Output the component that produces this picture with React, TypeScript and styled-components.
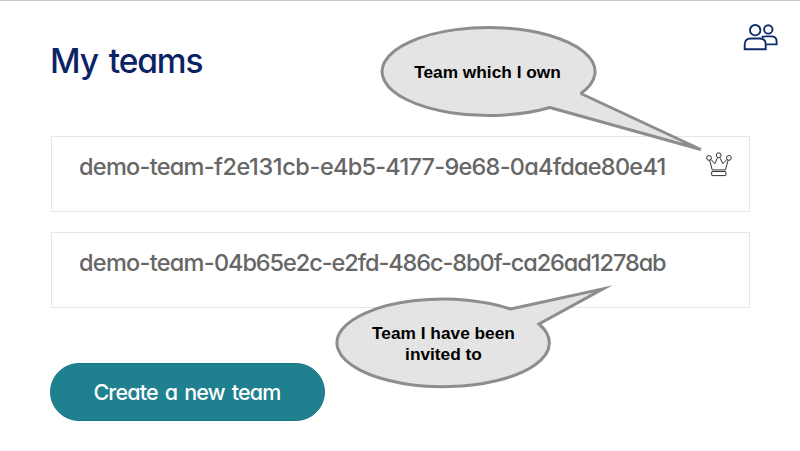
import React from "react";
import styled, { createGlobalStyle } from "styled-components";

const GlobalStyle = createGlobalStyle`
  * { box-sizing: border-box; }
  body { margin: 0; background: #fff; }
`;

const Page = styled.main`
  position: relative;
  width: 800px;
  height: 451px;
  padding: 21px 21px 0 50px;
  border-top: 1px solid #c9c9c9;
  background: #fff;
  overflow: hidden;
  font-family: Inter, "Open Sans", sans-serif;
  font-feature-settings: "cv11" 1;
`;

const Header = styled.header`
  display: flex;
  justify-content: space-between;
  align-items: flex-start;
  height: 114px;
`;

const Title = styled.h1`
  margin: 18px 0 0;
  font-size: 33.5px;
  line-height: 42px;
  font-weight: 550;
  letter-spacing: -1.1px;
  word-spacing: 3px;
  color: #0b2265;
  white-space: nowrap;
`;

const TeamList = styled.ul`
  display: flex;
  flex-direction: column;
  gap: 20px;
  width: 699px;
  margin: 0 0 0 1px;
  padding: 0;
  list-style: none;
`;

const TeamRow = styled.li`
  display: flex;
  justify-content: space-between;
  align-items: flex-start;
  height: 76px;
  padding: 14px 16px 0 27px;
  border: 1px solid #e6e6e6;
`;

const TeamName = styled.span`
  font-size: 23.5px;
  line-height: 32px;
  font-weight: 500;
  letter-spacing: -0.72px;
  color: #666;
  white-space: nowrap;
`;

const TeamId = styled.span<{ $spacing: number }>`
  letter-spacing: ${(p) => p.$spacing}px;
`;

const CreateButton = styled.button`
  display: block;
  width: 275px;
  height: 58px;
  margin-top: 55px;
  padding: 0 1px 1px 0;
  border: 1px solid #17788a;
  border-radius: 30px;
  background: #1f808f;
  color: #fff;
  font: inherit;
  font-feature-settings: inherit;
  font-size: 21.5px;
  font-weight: 550;
  letter-spacing: -0.85px;
  word-spacing: 2.2px;
`;

const Callout = styled.div<{ $x: number; $y: number; $w: number; $h: number }>`
  position: absolute;
  left: ${(p) => p.$x}px;
  top: ${(p) => p.$y}px;
  width: ${(p) => p.$w}px;
  height: ${(p) => p.$h}px;
`;

const Shape = styled.svg`
  position: absolute;
  inset: 0;
  fill: #e4e4e4;
  stroke: #8d8d8d;
  stroke-width: 3;
  overflow: visible;
`;

const CalloutText = styled.p<{ $top: number }>`
  position: relative;
  width: 215px;
  margin: 0;
  padding-top: ${(p) => p.$top}px;
  font: bold 17.3px/21px "Liberation Sans", Arial, sans-serif;
  text-align: center;
  color: #000;
`;

const PeopleIcon = () => (
  <svg width="36" height="30" viewBox="0 0 36 30" fill="none" stroke="#0f2c6b" strokeWidth="1.9">
    <circle cx="12.2" cy="8.2" r="5.2" />
    <path d="M1.7 27.2V22.5C1.7 18.5 4 16.5 7.7 16.5H16.8C20.6 16.5 22.7 18.5 22.7 22.5V27.2Z" />
    <circle cx="25.3" cy="7.4" r="4.2" />
    <path d="M18.7 15.2C20.2 14.5 21.7 14.4 23.2 14.4H28.2C31.7 14.4 33.6 16.2 33.6 19.4V22.4H23.4" />
  </svg>
);

const CrownIcon = () => (
  <svg width="28" height="26" viewBox="0 0 28 26" fill="none" stroke="#333" strokeWidth="1">
    <circle cx="4" cy="6.9" r="2.4" />
    <circle cx="13.7" cy="4.2" r="2.4" />
    <circle cx="23.9" cy="6.9" r="2.4" />
    <path d="M4.7 9.2L7.2 18.9H20.4L23.2 9.2M5.9 8.4L9.8 12.6L12.7 6.4M14.7 6.4L17.8 12.6L22 8.4" />
    <rect x="6.7" y="20.5" width="14.2" height="4.1" rx="0.4" />
  </svg>
);

export default function App() {
  return (
    <>
      <GlobalStyle />
      <Page>
        <Header>
          <Title>My teams</Title>
          <PeopleIcon />
        </Header>
        <TeamList>
          <TeamRow>
            <TeamName>
              demo-team-<TeamId $spacing={-0.4}>f2e131cb-</TeamId>
              <TeamId $spacing={-0.74}>e4b5-4177-9e68-0a4fdae80e41</TeamId>
            </TeamName>
            <CrownIcon />
          </TeamRow>
          <TeamRow>
            <TeamName>
              demo-team-<TeamId $spacing={-1.06}>04b65e2c-e2fd-486c-8b0f-ca26ad1278ab</TeamId>
            </TeamName>
          </TeamRow>
        </TeamList>
        <CreateButton>Create a new team</CreateButton>
        <Callout $x={380} $y={25} $w={324} $h={127}>
          <Shape width="324" height="127">
            <path d="M202 67.5L322 123.5L171 81.5A106.5 44 0 1 1 202 67.5Z" strokeLinejoin="bevel" transform="translate(-1.2 0)" />
          </Shape>
          <CalloutText $top={36}>Team which I own</CalloutText>
        </Callout>
        <Callout $x={336} $y={283} $w={278} $h={106}>
          <Shape width="278" height="106">
            <path d="M172.5 24L265 3.8L201 39A106.2 43.8 0 1 1 172.5 24Z" strokeMiterlimit="12" transform="translate(2 1)" />
          </Shape>
          <CalloutText $top={39}>
            Team I have been
            <br />
            invited to
          </CalloutText>
        </Callout>
      </Page>
    </>
  );
}
